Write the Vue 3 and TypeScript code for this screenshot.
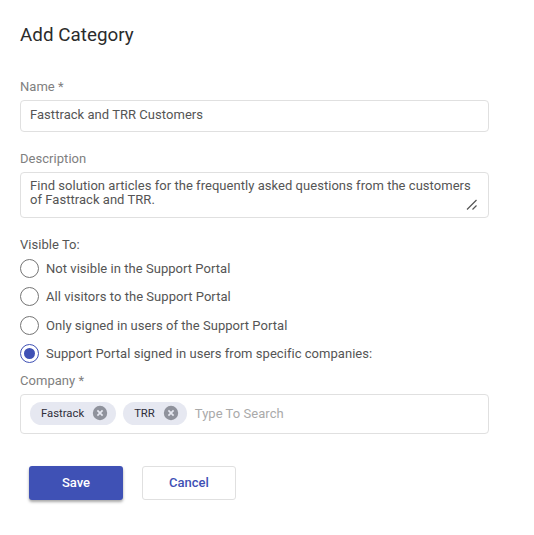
<script setup lang="ts">
const options = [
  'Not visible in the Support Portal',
  'All visitors to the Support Portal',
  'Only signed in users of the Support Portal',
  'Support Portal signed in users from specific companies:',
]
const selected = 3
const chips = ['Fastrack', 'TRR']
</script>

<template>
  <form class="page" @submit.prevent>
    <h1 class="title">Add Category</h1>

    <label class="label name-label">Name *</label>
    <div class="box name-box">Fasttrack and TRR Customers</div>

    <label class="label desc-label">Description</label>
    <div class="box desc-box">
      Find solution articles for the frequently asked questions from the customers of Fasttrack and TRR.
      <svg class="grip" width="12" height="12" viewBox="0 0 12 12">
        <path d="M1 10.5 L10.5 1 M6.5 10.5 L10.5 6.5" stroke="#555" stroke-width="1.2" fill="none" />
      </svg>
    </div>

    <div class="visible">Visible To:</div>
    <div class="radios">
      <div v-for="(opt, i) in options" :key="opt" class="radio-row">
        <span class="radio" :class="{ on: i === selected }"><span v-if="i === selected" class="dot"></span></span>
        <span class="radio-text">{{ opt }}</span>
      </div>
    </div>

    <label class="label company-label">Company *</label>
    <div class="box company-box">
      <span v-for="c in chips" :key="c" class="chip">
        <span class="chip-text">{{ c }}</span>
        <svg class="chip-x" width="16" height="16" viewBox="0 0 16 16">
          <circle cx="8" cy="8" r="7.2" fill="#8f929c" />
          <path d="M5.4 5.4 L10.6 10.6 M10.6 5.4 L5.4 10.6" stroke="#e6e8f1" stroke-width="1.7" />
        </svg>
      </span>
      <span class="placeholder">Type To Search</span>
    </div>

    <div class="actions">
      <button type="button" class="btn save">Save</button>
      <button type="button" class="btn cancel">Cancel</button>
    </div>
  </form>
</template>

<style>
html, body { background: #fff; }
</style>

<style scoped>
.page {
  box-sizing: border-box;
  width: 534px;
  height: 535px;
  padding: 24px 45px 0 20px;
  font-family: Roboto, "Liberation Sans", sans-serif;
  font-size: 13px;
  letter-spacing: 0.04px;
  color: #555;
  display: flex;
  flex-direction: column;
  overflow: hidden;
}
.title {
  margin: 0;
  font-size: 18.8px;
  line-height: 22px;
  font-weight: 400;
  color: #2b2b2b;
}
.label {
  display: block;
  color: #808080;
  line-height: 16px;
}
.name-label { margin-top: 33px; }
.desc-label { margin-top: 19px; }
.company-label { margin-top: 5.6px; }
.box {
  box-sizing: border-box;
  border: 1px solid #e0e0e0;
  border-radius: 4px;
  background: #fff;
}
.name-box {
  margin-top: 5px;
  height: 32px;
  line-height: 28px;
  padding: 0 9px;
}
.desc-box {
  position: relative;
  margin-top: 5px;
  height: 46px;
  padding: 6px 9px;
  line-height: 14px;
}
.grip {
  position: absolute;
  right: 10px;
  bottom: 6px;
}
.visible {
  margin-top: 19px;
  line-height: 15px;
}
.radios {
  display: flex;
  flex-direction: column;
  margin-top: 2.4px;
}
.radio-row {
  display: flex;
  align-items: center;
  height: 28.3px;
  gap: 7px;
}
.radio {
  box-sizing: border-box;
  width: 19px;
  height: 19px;
  border: 1px solid #757575;
  border-radius: 50%;
  display: flex;
  align-items: center;
  justify-content: center;
}
.radio.on { border-color: #3f51b5; }
.dot {
  width: 11px;
  height: 11px;
  border-radius: 50%;
  background: #3f51b5;
}
.company-box {
  margin-top: 5px;
  height: 40px;
  padding: 0 9px 2px;
  display: flex;
  align-items: center;
  gap: 7px;
}
.chip {
  box-sizing: border-box;
  height: 23px;
  border-radius: 12px;
  background: #e6e8f1;
  padding: 0 8px 0 11px;
  display: flex;
  align-items: center;
  gap: 8px;
  font-size: 11.3px;
  letter-spacing: 0;
  color: #2e2e3a;
}
.placeholder {
  color: #aaa;
  margin-left: 1px;
}
.actions {
  display: flex;
  gap: 19px;
  margin-top: 32px;
  padding-left: 9px;
}
.btn {
  box-sizing: border-box;
  width: 94px;
  height: 34px;
  padding: 0 0 1px;
  border-radius: 3px;
  font-family: inherit;
  font-size: 13px;
  font-weight: 500;
  cursor: pointer;
}
.save {
  background: #3f51b5;
  color: #fff;
  border: none;
  box-shadow: 0 2px 3px rgba(0, 0, 0, 0.35);
}
.cancel {
  background: #fff;
  color: #3f51b5;
  border: 1px solid #e0e0e0;
}
</style>
